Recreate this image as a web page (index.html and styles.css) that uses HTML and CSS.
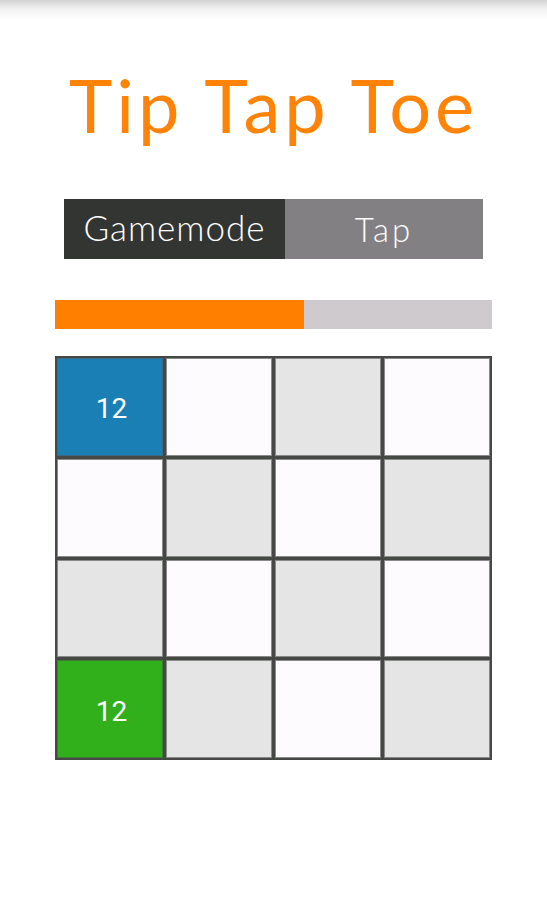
FILE: index.html
```html
<!DOCTYPE html>
<html lang="en">
<head>
  <meta charset="UTF-8">
  <meta name="viewport" content="width=device-width, initial-scale=1.0">
  <title>Tip Tap Toe</title>
  <link rel="stylesheet" href="styles.css">
</head>
<body>
  <div class="shade"></div>
  <div class="container">
    <h1 class="title">Tip Tap Toe</h1>

    <div class="mode-bar">
      <div class="mode-label">Gamemode</div>
      <div class="mode-value">Tap</div>
    </div>

    <div class="progress">
      <div class="progress-fill" style="width: 57%;"></div>
    </div>

    <div class="board">
      <div class="cell blue">12</div>
      <div class="cell light"></div>
      <div class="cell gray"></div>
      <div class="cell light"></div>

      <div class="cell light"></div>
      <div class="cell gray"></div>
      <div class="cell light"></div>
      <div class="cell gray"></div>

      <div class="cell gray"></div>
      <div class="cell light"></div>
      <div class="cell gray"></div>
      <div class="cell light"></div>

      <div class="cell green">12</div>
      <div class="cell gray"></div>
      <div class="cell light"></div>
      <div class="cell gray"></div>
    </div>
  </div>
</body>
</html>
```

FILE: styles.css
```css
body {
  margin: 0;
  padding: 0;
  background-color: #ffffff;
  font-family: Lato, "Liberation Sans", sans-serif;
}

/* shadow left under the action bar */
.shade {
  height: 20px;
  background: linear-gradient(#d2d2d2, #f2f2f2 45%, #ffffff);
}

.container {
  display: flex;
  flex-direction: column;
  align-items: center;
}

.title {
  margin: 40px 0 0;
  font-size: 74px;
  font-weight: 400;
  line-height: 89px;
  letter-spacing: 4px;
  color: #ff8307;
}

.mode-bar {
  display: flex;
  width: 419px;
  height: 60px;
  margin-top: 50px;
  color: #ffffff;
  font-weight: 300;
}

.mode-label {
  display: flex;
  align-items: center;
  justify-content: center;
  width: 221px;
  padding-bottom: 4px;
  box-sizing: border-box;
  background-color: #323532;
  font-size: 35px;
  letter-spacing: 1px;
}

.mode-value {
  display: flex;
  align-items: center;
  justify-content: center;
  flex: 1;
  background-color: #828083;
  font-size: 33px;
  letter-spacing: 3px;
}

.progress {
  width: 437px;
  height: 29px;
  margin-top: 41px;
  background-color: #cfcacd;
}

.progress-fill {
  height: 100%;
  background-color: #ff8000;
}

.board {
  display: grid;
  grid-template-columns: repeat(4, 1fr);
  grid-template-rows: repeat(4, 1fr);
  gap: 3px;
  width: 437px;
  height: 404px;
  margin-top: 27px;
  padding: 2px;
  box-sizing: border-box;
  background-color: #464846;
}

.cell {
  display: flex;
  align-items: center;
  justify-content: center;
  border: 1px solid #8a8a8a;
  padding: 4px 0 0 3px;
  box-sizing: border-box;
  font-family: Roboto, "Liberation Sans", sans-serif;
  font-size: 28px;
  color: #ffffff;
}

.light {
  background-color: #fefbff;
}

.gray {
  background-color: #e5e5e5;
}

.blue {
  background-color: #1a7fb5;
  border-color: #3c6a82;
}

.green {
  background-color: #31b01c;
  border-color: #3e7a33;
}
```
